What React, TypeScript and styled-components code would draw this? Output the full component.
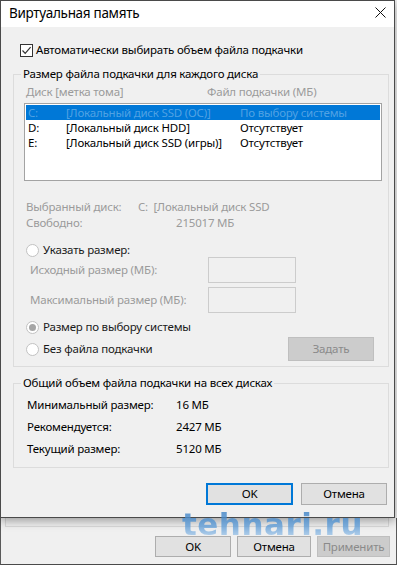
import React from "react";
import styled, { createGlobalStyle } from "styled-components";

const GlobalStyle = createGlobalStyle`
  html, body { margin: 0; padding: 0; background: #f0f0f0; }
  body {
    font-family: "Segoe UI", "Noto Sans", sans-serif;
    font-size: 11.5px;
    letter-spacing: -0.2px;
    line-height: 16px;
    color: #000;
  }
  * { box-sizing: border-box; }
`;

const Screen = styled.div`
  position: relative;
  width: 397px;
  height: 565px;
  overflow: hidden;
  background: #f0f0f0;
`;

const Dialog = styled.div`
  position: relative;
  z-index: 1;
  width: 395px;
  border: 1px solid #4a4a4a;
  background: #f0f0f0;
  box-shadow: 0 3px 9px rgba(0, 0, 0, 0.35);
`;

const TitleBar = styled.div`
  height: 26px;
  background: #fff;
  display: flex;
  justify-content: space-between;
  align-items: flex-start;
  padding: 2px 1px 0 8px;
`;

const Title = styled.span`
  font-size: 13.5px;
  letter-spacing: -0.3px;
  line-height: 20px;
`;

const CloseBox = styled.span`
  width: 26px;
  height: 22px;
  margin-top: -2px;
  display: flex;
  align-items: center;
  justify-content: center;
`;

const Body = styled.div`
  padding: 15px 5px 12px 12px;
`;

const CheckRow = styled.label`
  display: flex;
  align-items: center;
  gap: 3px;
  height: 16px;
  margin-left: 7px;
`;

const CheckBox = styled.span`
  width: 13px;
  height: 13px;
  border: 1px solid #333;
  background: #fff;
  display: flex;
  align-items: center;
  justify-content: center;
`;

const GroupBox = styled.fieldset<{ $mt: number }>`
  margin: ${(p) => p.$mt}px 0 0;
  padding: 0;
  border: 1px solid #dcdcdc;
  min-width: 0;
`;

const Legend = styled.legend`
  margin-left: 7px;
  padding: 0 2px;
  line-height: 16px;
`;

const GroupInner = styled.div<{ $pb: number }>`
  padding: 0 6px ${(p) => p.$pb}px 10px;
`;

const ColumnHeader = styled.div`
  display: grid;
  grid-template-columns: 181px 1fr;
  margin-top: 2px;
  padding-left: 2px;
  color: #9b9b9b;
`;

const ListBox = styled.div`
  margin-top: 3px;
  height: 78px;
  border: 1px solid #a3a3a3;
  background: #fff;
  padding: 1px;
`;

const ListRow = styled.div<{ $selected?: boolean }>`
  display: grid;
  grid-template-columns: 38px 174px 1fr;
  height: 15px;
  line-height: 15px;
  padding-left: 2px;
  white-space: nowrap;
  background: ${(p) => (p.$selected ? "#0078d7" : "transparent")};
  color: ${(p) => (p.$selected ? "rgba(255,255,255,0.32)" : "#000")};
`;

const InfoRow = styled.div<{ $mt?: number; $valueX: number }>`
  display: grid;
  grid-template-columns: ${(p) => p.$valueX}px 1fr;
  margin-top: ${(p) => p.$mt ?? 0}px;
  padding-left: 2px;
  color: #9b9b9b;
  white-space: nowrap;
`;

const RadioRow = styled.label<{ $mt: number }>`
  display: flex;
  align-items: center;
  gap: 4px;
  height: 14px;
  margin-top: ${(p) => p.$mt}px;
  padding-left: 2px;
  color: #1a1a1a;
`;

const Radio = styled.span<{ $checked?: boolean }>`
  flex: none;
  width: 13px;
  height: 13px;
  border-radius: 50%;
  border: 1px solid #c2c2c2;
  background: #fff;
  display: flex;
  align-items: center;
  justify-content: center;
  &::after {
    content: "";
    width: 7px;
    height: 7px;
    border-radius: 50%;
    background: ${(p) => (p.$checked ? "#a6a6a6" : "transparent")};
  }
`;

const FieldRow = styled.div<{ $mt: number }>`
  display: grid;
  grid-template-columns: 178px 88px;
  align-items: center;
  margin-top: ${(p) => p.$mt}px;
  padding-left: 6px;
  color: #9b9b9b;
`;

const TextInput = styled.div`
  height: 26px;
  border: 1px solid #cccccc;
  background: #f0f0f0;
`;

const SetRow = styled.div`
  display: flex;
  align-items: center;
  justify-content: space-between;
  margin-top: 3px;
  padding-right: 8px;
`;

const Button = styled.button<{ $w: number; $h: number; $variant?: "default" | "disabled" }>`
  width: ${(p) => p.$w}px;
  height: ${(p) => p.$h}px;
  padding: 0;
  font: inherit;
  letter-spacing: inherit;
  line-height: 14px;
  background: ${(p) => (p.$variant === "disabled" ? "#cccccc" : "#e1e1e1")};
  color: ${(p) => (p.$variant === "disabled" ? "#8a8a8a" : "#000")};
  border: ${(p) =>
    p.$variant === "default"
      ? "2px solid #0078d7"
      : p.$variant === "disabled"
      ? "1px solid #bfbfbf"
      : "1px solid #adadad"};
`;

const TotalRow = styled.div`
  display: grid;
  grid-template-columns: 149px 1fr;
  margin-top: 6px;
  padding-left: 3px;
`;

const DialogButtons = styled.div`
  display: flex;
  justify-content: flex-end;
  gap: 8px;
  margin-top: 15px;
  padding-right: 2px;
`;

const ParentTail = styled.div`
  height: 47px;
  border-left: 1px solid #5a5a5a;
  border-right: 1px solid #5a5a5a;
  border-bottom: 1px solid #4a4a4a;
`;

const PanelEdge = styled.div`
  height: 9px;
  margin: 0 7px 0 4px;
  border: 1px solid #d9d9d9;
  border-top: none;
`;

const ParentButtons = styled.div`
  display: flex;
  justify-content: flex-end;
  gap: 6px;
  margin-top: 9px;
  padding-right: 6px;
`;

const Watermark = styled.div`
  position: absolute;
  z-index: 2;
  left: 182px;
  top: 511px;
  font-family: "DejaVu Sans", sans-serif;
  font-weight: bold;
  font-size: 31px;
  line-height: 26px;
  letter-spacing: 0.5px;
  background: linear-gradient(180deg, #3d82c6 0%, #5c9bd6 55%, #a9cbeb 100%);
  -webkit-background-clip: text;
  background-clip: text;
  color: transparent;
  opacity: 0.8;
  pointer-events: none;
`;

const disks = [
  { letter: "C:", label: "[Локальный диск SSD (ОС)]", size: "По выбору системы", selected: true },
  { letter: "D:", label: "[Локальный диск HDD]", size: "Отсутствует" },
  { letter: "E:", label: "[Локальный диск SSD (игры)]", size: "Отсутствует" },
];

const totals = [
  ["Минимальный размер:", "16 МБ"],
  ["Рекомендуется:", "2427 МБ"],
  ["Текущий размер:", "5120 МБ"],
];

export default function App() {
  return (
    <Screen>
      <GlobalStyle />
      <Dialog>
        <TitleBar>
          <Title>Виртуальная память</Title>
          <CloseBox>
            <svg width="11" height="11" viewBox="0 0 11 11">
              <path d="M0.5 0.5L10.5 10.5M10.5 0.5L0.5 10.5" stroke="#111" strokeWidth="1" />
            </svg>
          </CloseBox>
        </TitleBar>
        <Body>
          <CheckRow>
            <CheckBox>
              <svg width="11" height="11" viewBox="0 0 11 11">
                <path d="M1.5 5.5L4.2 8.3L9.6 2.2" fill="none" stroke="#333" strokeWidth="1.2" />
              </svg>
            </CheckBox>
            Автоматически выбирать объем файла подкачки
          </CheckRow>

          <GroupBox $mt={8}>
            <Legend>Размер файла подкачки для каждого диска</Legend>
            <GroupInner $pb={5}>
              <ColumnHeader>
                <span>Диск [метка тома]</span>
                <span>Файл подкачки (МБ)</span>
              </ColumnHeader>
              <ListBox>
                {disks.map((d) => (
                  <ListRow key={d.letter} $selected={d.selected}>
                    <span>{d.letter}</span>
                    <span>{d.label}</span>
                    <span>{d.size}</span>
                  </ListRow>
                ))}
              </ListBox>
              <InfoRow $mt={18} $valueX={112}>
                <span>Выбранный диск:</span>
                <span>C:&nbsp; [Локальный диск SSD</span>
              </InfoRow>
              <InfoRow $valueX={150}>
                <span>Свободно:</span>
                <span>215017 МБ</span>
              </InfoRow>
              <RadioRow $mt={12}>
                <Radio />
                Указать размер:
              </RadioRow>
              <FieldRow $mt={0}>
                <span>Исходный размер (МБ):</span>
                <TextInput />
              </FieldRow>
              <FieldRow $mt={4}>
                <span>Максимальный размер (МБ):</span>
                <TextInput />
              </FieldRow>
              <RadioRow $mt={7}>
                <Radio $checked />
                Размер по выбору системы
              </RadioRow>
              <SetRow>
                <RadioRow $mt={0}>
                  <Radio />
                  Без файла подкачки
                </RadioRow>
                <Button $w={86} $h={24} $variant="disabled">
                  Задать
                </Button>
              </SetRow>
            </GroupInner>
          </GroupBox>

          <GroupBox $mt={8}>
            <Legend>Общий объем файла подкачки на всех дисках</Legend>
            <GroupInner $pb={10}>
              {totals.map(([k, v]) => (
                <TotalRow key={k}>
                  <span>{k}</span>
                  <span>{v}</span>
                </TotalRow>
              ))}
            </GroupInner>
          </GroupBox>

          <DialogButtons>
            <Button $w={87} $h={22} $variant="default">
              OK
            </Button>
            <Button $w={86} $h={22}>
              Отмена
            </Button>
          </DialogButtons>
        </Body>
      </Dialog>

      <ParentTail>
        <PanelEdge />
        <ParentButtons>
          <Button $w={76} $h={21}>
            OK
          </Button>
          <Button $w={74} $h={21}>
            Отмена
          </Button>
          <Button $w={73} $h={21} $variant="disabled">
            Применить
          </Button>
        </ParentButtons>
      </ParentTail>

      <Watermark>tehnari.ru</Watermark>
    </Screen>
  );
}
